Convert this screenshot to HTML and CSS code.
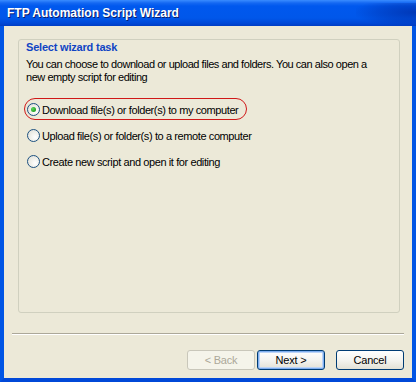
FILE: index.html
```html
<!DOCTYPE html>
<html>
<head>
<meta charset="utf-8">
<link rel="stylesheet" href="styles.css">
</head>
<body>
<div class="window">
  <div class="titlebar"><span class="title">FTP Automation Script Wizard</span></div>
  <div class="frame">
    <div class="content">
      <div class="group">
        <div class="heading">Select wizard task</div>
        <div class="desc">You can choose to download or upload files and folders. You can also open a new empty script for editing</div>
        <div class="options">
          <div class="option highlighted"><span class="radio checked"></span><span class="label">Download file(s) or folder(s) to my computer</span></div>
          <div class="option"><span class="radio"></span><span class="label">Upload file(s) or folder(s) to a remote computer</span></div>
          <div class="option"><span class="radio"></span><span class="label">Create new script and open it for editing</span></div>
        </div>
      </div>
      <div class="separator"></div>
      <div class="buttons">
        <button class="btn disabled">&lt; Back</button>
        <button class="btn default">Next &gt;</button>
        <button class="btn cancel">Cancel</button>
      </div>
    </div>
  </div>
</div>
</body>
</html>
```
FILE: styles.css
```css
html, body { margin: 0; padding: 0; }
body { width: 416px; height: 382px; overflow: hidden; background: #ECE9D8; }
.window { width: 416px; height: 382px; display: flex; flex-direction: column; font-family: "Liberation Sans", Tahoma, sans-serif; font-size: 11px; letter-spacing: -0.4px; color: #000; }
.titlebar {
  height: 26px; flex: none; box-sizing: border-box; padding-left: 7px;
  display: flex; align-items: center;
  background: linear-gradient(to bottom, #3A8CFF 0px, #1468F2 3px, #0058EE 6px, #0057EA 18px, #0049D8 23px, #003DC4 26px);
  position: relative;
}
.titlebar::after {
  content: ""; position: absolute; right: 0; top: 3px; width: 60px; height: 23px;
  background: radial-gradient(ellipse at 100% 40%, rgba(0,30,140,0.55) 0, rgba(0,30,140,0.25) 45%, rgba(0,30,140,0) 75%);
}
.title { color: #fff; font-family: "Liberation Sans", sans-serif; font-weight: bold; font-size: 12px; letter-spacing: 0; text-shadow: 1px 1px 0 #0A1E6E; }
.frame {
  flex: 1; display: flex; box-sizing: border-box;
  border-left: 4px solid #0055E5; border-right: 4px solid #0055E5; border-bottom: 4px solid #0048D8;
  box-shadow: inset 1px 0 0 #0831D9, inset -1px 0 0 #0831D9, inset 0 -1px 0 #0831D9;
}
.content { flex: 1; background: #ECE9D8; display: flex; flex-direction: column; }
.group {
  margin: 13px 12px 0 14px; height: 274px; box-sizing: border-box;
  border: 1px solid #D0D0BF; border-radius: 3px; padding: 1px 0 0 7px;
}
.heading { color: #0F44C4; font-weight: bold; line-height: 13px; letter-spacing: -0.2px; }
.desc { margin-top: 4px; line-height: 13px; width: 350px; letter-spacing: -0.45px; }
.options { margin-top: 19px; display: flex; flex-direction: column; gap: 13px; }
.option { display: flex; align-items: center; height: 13px; margin-left: 1px; }
.option.highlighted { position: relative; }
.option.highlighted::before {
  content: ""; position: absolute; left: -3px; top: -5px; width: 221px; height: 20px;
  border: 1px solid #D01818; border-radius: 11px;
}
.radio {
  width: 11px; height: 11px; border: 1px solid #1C5180; border-radius: 50%;
  background: radial-gradient(circle at 65% 65%, #FFFFFF 0, #F2F2EC 40%, #DCDCD5 100%);
  position: relative; flex: none; margin-right: 2px;
}
.radio.checked::after {
  content: ""; position: absolute; left: 3px; top: 3px; width: 5px; height: 5px; border-radius: 50%;
  background: radial-gradient(circle at 35% 35%, #5CD65C 0, #21A121 70%);
}
.separator { margin: 20px 8px 0 8px; border-top: 1px solid #ACA899; border-bottom: 1px solid #FFFFFF; height: 0; }
.buttons { display: flex; justify-content: flex-end; margin: 15px 8px 0 0; }
.btn {
  width: 68px; height: 20px; box-sizing: border-box; margin: 0; padding: 0;
  font-family: "Liberation Sans", Tahoma, sans-serif; font-size: 11px; letter-spacing: -0.2px; color: #000;
  border: 1px solid #003C74; border-radius: 3px;
  background: linear-gradient(to bottom, #FFFFFF 0, #F4F4F0 50%, #E3E1D6 100%);
}
.btn.disabled { color: #ACA899; border-color: #C9C7BA; background: #F5F4EA; margin-right: 2px; }
.btn.default { box-shadow: inset 0 0 0 1px #7EAEF0, inset 0 0 0 2px #BCD4F6; margin-right: 11px; }
```
